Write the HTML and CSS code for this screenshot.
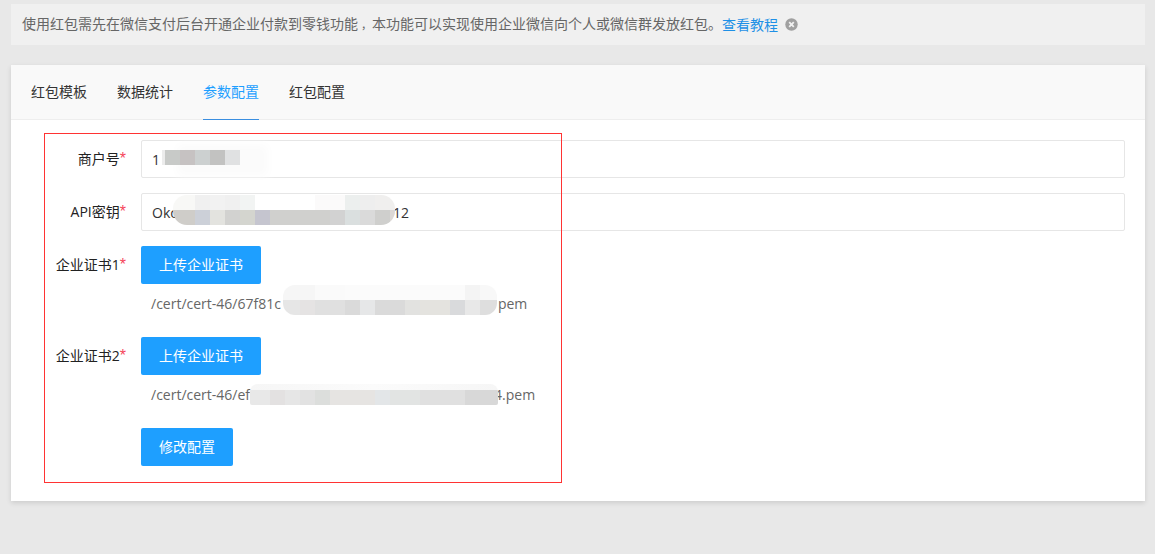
FILE: index.html
```html
<!DOCTYPE html>
<html lang="zh-CN">
<head>
<meta charset="utf-8">
<title>参数配置</title>
<link rel="stylesheet" href="styles.css">
</head>
<body>
<div class="alert">
  <span>使用红包需先在微信支付后台开通企业付款到零钱功能<span class="comma">，</span>本功能可以实现使用企业微信向个人或微信群发放红包。</span>
  <a class="alert-link">查看教程</a>
  <svg class="alert-close" width="13" height="13" viewBox="0 0 13 13"><circle cx="6.5" cy="6.5" r="6.2" fill="#a0a0a0"/><path d="M4.2 4.2l4.6 4.6M8.8 4.2l-4.6 4.6" stroke="#f0f0f0" stroke-width="1.8"/></svg>
</div>
<main class="card">
  <nav class="tabs">
    <a class="tab">红包模板</a>
    <a class="tab">数据统计</a>
    <a class="tab active">参数配置</a>
    <a class="tab">红包配置</a>
  </nav>
  <form class="form">
    <div class="row">
      <label class="label">商户号<i>*</i></label>
      <div class="field"><div class="input">1</div></div>
    </div>
    <div class="row">
      <label class="label">API密钥<i>*</i></label>
      <div class="field"><div class="input">Okc<span class="spacer-a"></span>12</div></div>
    </div>
    <div class="row tight">
      <label class="label">企业证书1<i>*</i></label>
      <div class="field">
        <button type="button" class="btn upload">上传企业证书</button>
        <div class="path">/cert/cert-46/67f81c<span class="spacer-b"></span>pem</div>
      </div>
    </div>
    <div class="row tight">
      <label class="label">企业证书2<i>*</i></label>
      <div class="field">
        <button type="button" class="btn upload">上传企业证书</button>
        <div class="path">/cert/cert-46/ef<span class="spacer-c"></span>4.pem</div>
      </div>
    </div>
    <div class="row">
      <label class="label"></label>
      <div class="field"><button type="button" class="btn submit">修改配置</button></div>
    </div>
  </form>
  <div class="mosaic m1"></div>
  <div class="mosaic m2"></div>
  <div class="mosaic m3"></div>
  <div class="mosaic m4"></div>
  <div class="highlight"></div>
</main>
</body>
</html>
```
FILE: styles.css
```css
* { box-sizing: border-box; }
html, body { height: 100%; }
body {
  margin: 0;
  padding: 4px 10px 0 11px;
  background: #e8e8e8;
  color: #333;
  font: 14px/20px "Open Sans", "Noto Sans CJK SC", sans-serif;
  overflow: hidden;
}
.alert {
  display: flex;
  align-items: center;
  height: 41px;
  padding: 0 11px;
  background: #f0f0f0;
  color: #666;
}
.comma { font-size: 11px; padding-left: 3px; }
.alert-link { color: #1e90e6; margin-right: 7px; }
.alert-close { flex: none; }
.card {
  position: relative;
  margin-top: 20px;
  height: 436px;
  background: #fff;
  box-shadow: 0 2px 5px rgba(0, 0, 0, .12);
}
.tabs {
  display: flex;
  gap: 30px;
  height: 55px;
  padding: 0 20px;
  background: #f9f9f9;
  border-bottom: 1px solid #eee;
}
.tab {
  height: 55px;
  line-height: 53px;
  color: #333;
}
.tab.active {
  color: #1e9fff;
  border-bottom: 1px solid #3a8ee0;
  margin-bottom: -1px;
}
.form {
  display: flex;
  flex-direction: column;
  gap: 15px;
  padding: 20px 20px 0 0;
}
.row { display: flex; }
.row.tight { margin-bottom: -2px; }
.label {
  flex: none;
  width: 130px;
  height: 38px;
  padding-right: 15px;
  text-align: right;
  line-height: 37px;
  color: #222;
}
.label i {
  color: #f5475b;
  font-family: "Liberation Sans", sans-serif;
  font-size: 16px;
  font-style: normal;
  line-height: 1;
}
.field { flex: 1; }
.input {
  display: flex;
  height: 38px;
  padding: 0 10px;
  border: 1px solid #e6e6e6;
  border-radius: 2px;
  line-height: 37px;
  color: #333;
  white-space: pre;
}
.spacer-a { width: 216px; }
.spacer-b { width: 217px; }
.spacer-c { width: 244px; }
.btn {
  display: block;
  height: 38px;
  padding: 0;
  border: 0;
  border-radius: 2px;
  background: #1e9fff;
  color: #fff;
  font: inherit;
}
.upload { width: 120px; }
.submit { width: 92px; }
.path {
  display: flex;
  height: 40px;
  padding-left: 10px;
  line-height: 40px;
  color: #666;
  white-space: pre;
}
.highlight {
  position: absolute;
  left: 33px;
  top: 68px;
  width: 518px;
  height: 350px;
  border: 1px solid #f33;
  pointer-events: none;
}
.mosaic { position: absolute; }
.m1 {
  left: 154px; top: 85px; width: 75px; height: 15px;
  background: linear-gradient(90deg, #c8cac8 0 15px, #c6c2c2 15px 30px, #ccd0d0 30px 45px, #c2c2c1 45px 60px, #e0e1e2 60px);
  box-shadow: -3px 0 0 #ececec, 20px 3px 10px 8px #fbfbfb;
}
.m2 {
  left: 162px; top: 130px; width: 222px; height: 30px;
  border-radius: 14px;
  background:
    linear-gradient(90deg, #f8f8f6 0 22px, #f0f0f0 22px 37px, #f2f2f2 37px 52px, #f0f0f0 52px 67px, #f2f4f3 67px 82px, #fff 82px 142px, #fbfafa 142px 172px, #ecefee 172px 187px, #eee 187px 202px, #f0efee 202px) top / 100% 15px no-repeat,
    linear-gradient(90deg, #cfcdc9 0 22px, #ccd0d8 22px 37px, #e3e3df 37px 52px, #d2d2d0 52px 67px, #d4d5cf 67px 82px, #c5c5cf 82px 97px, #d0d0ce 97px 157px, #d2d2d2 157px 172px, #dadfdf 172px 187px, #dadada 187px 202px, #cfcfcd 202px 217px, #dcd8d6 217px) bottom / 100% 15px no-repeat;
}
.m3 {
  left: 272px; top: 220px; width: 214px; height: 30px;
  border-radius: 12px;
  background:
    linear-gradient(90deg, #f6f6f6 0 32px, #fafafa 32px 62px, #fbfbfb 62px 182px, #f4f4f4 182px 197px, #f8f8f8 197px) top / 100% 15px no-repeat,
    linear-gradient(90deg, #e6e6e6 0 17px, #e5e3e3 17px 32px, #e0e0e0 32px 62px, #dadada 62px 77px, #e6e7e8 77px 92px, #dadada 92px 122px, #e2e2e0 122px 137px, #e4e3df 137px 167px, #d9dadc 167px 182px, #e8e8e8 182px 197px, #dedede 197px) bottom / 100% 15px no-repeat;
}
.m4 {
  left: 239px; top: 319px; width: 248px; height: 21px;
  border-radius: 8px 8px 2px 2px;
  background:
    linear-gradient(90deg, #f6f6f6, #fbfbfb 50%, #f6f6f6) top / 100% 6px no-repeat,
    linear-gradient(90deg, #e8e8e8 0 20px, #e3e1e1 20px 35px, #e6e6e6 35px 50px, #e2e2e2 50px 65px, #dcdedc 65px 80px, #e6e4e2 80px 125px, #e3e6e8 125px 140px, #e2e4e3 140px 170px, #e0e0e0 170px 215px, #d8d8d8 215px) bottom / 100% 15px no-repeat;
}
```
